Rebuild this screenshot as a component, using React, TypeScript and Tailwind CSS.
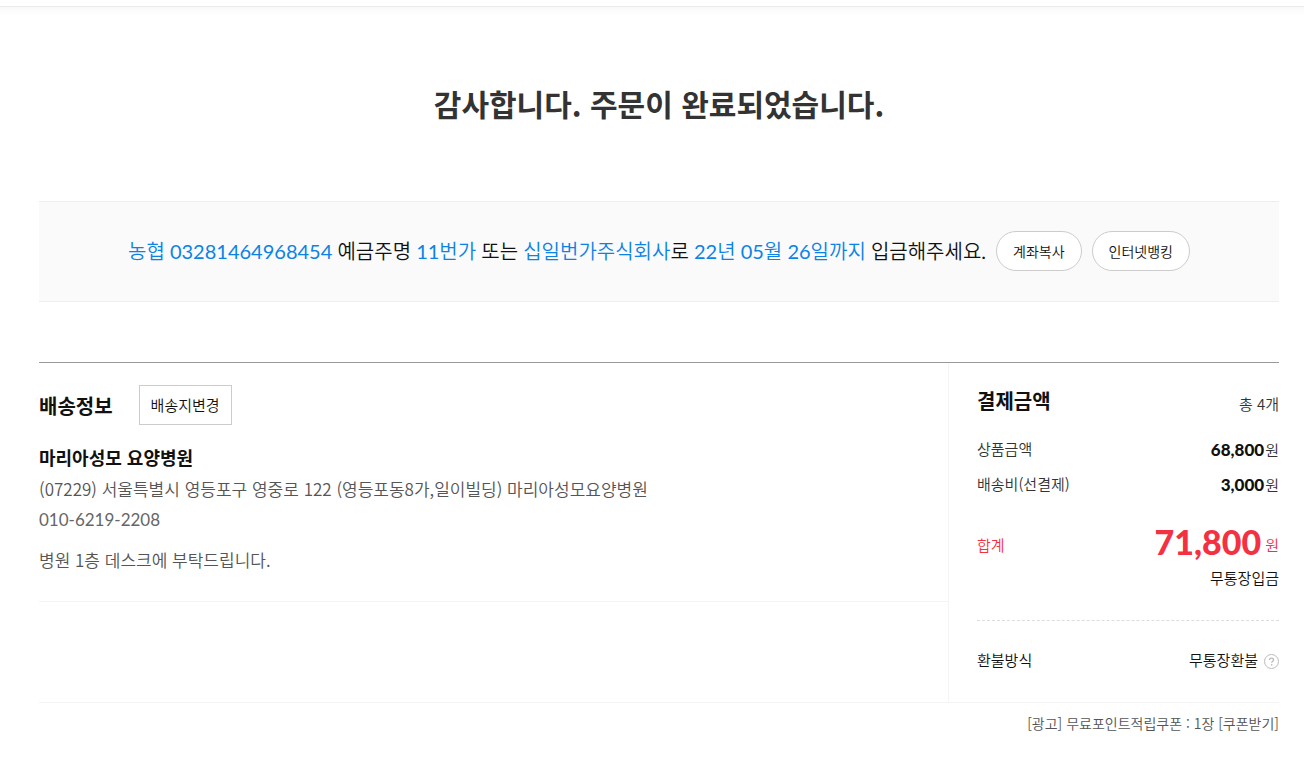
import { ReactNode } from "react"

const charges = [
  { label: "상품금액", amount: "68,800" },
  { label: "배송비(선결제)", amount: "3,000" },
]

function Blue({ children }: { children: ReactNode }) {
  return <em className="not-italic text-[#0b83e6]">{children}</em>
}

function DepositNotice() {
  return (
    <section className="mt-[76px] flex h-[101px] items-center justify-center border-y border-[#eee] bg-[#fafafa] pb-[2px]">
      <p className="font-['Lato','Noto_Sans_CJK_KR_DemiLight','Noto_Sans_CJK_KR',sans-serif] text-[20px] font-normal leading-[30px] text-[#111]">
        <Blue>농협 03281464968454</Blue> 예금주명 <Blue>11번가</Blue> 또는 <Blue>십일번가주식회사</Blue>로 <Blue>22년 05월 26일까지</Blue> 입금해주세요.
      </p>
      <div className="ml-[10px] flex gap-[10px]">
        <button type="button" className="h-10 cursor-pointer rounded-full border border-[#ccc] bg-white px-4 text-sm">계좌복사</button>
        <button type="button" className="h-10 cursor-pointer rounded-full border border-[#ccc] bg-white px-4 text-sm">인터넷뱅킹</button>
      </div>
    </section>
  )
}

function Delivery() {
  return (
    <section className="flex-1">
      <div className="h-[239px] border-b border-[#f4f4f4] pt-[22px]">
        <div className="flex items-center">
          <h2 className="pt-[2px] text-[20px] font-bold leading-[32px]">배송정보</h2>
          <button type="button" className="ml-[26px] h-10 cursor-pointer border border-[#ccc] bg-white px-[11px] text-[15px]">배송지변경</button>
        </div>
        <h3 className="mt-[17px] text-[18px] font-bold leading-[31px]">마리아성모 요양병원</h3>
        <div className="text-[17px] leading-[31px] text-[#555]">
          <p>(07229) 서울특별시 영등포구 영중로 122 (영등포동8가,일이빌딩) 마리아성모요양병원</p>
          <p className="font-['Lato','Noto_Sans_CJK_KR',sans-serif] font-normal text-[#666]">010-6219-2208</p>
          <p className="mt-[9px]">병원 1층 데스크에 부탁드립니다.</p>
        </div>
      </div>
    </section>
  )
}

function Payment() {
  return (
    <section className="w-[331px] border-l border-[#f4f4f4] pl-7 text-[15px]">
      <div className="flex items-center justify-between pt-[22px]">
        <h2 className="text-[20px] font-bold leading-[32px]">결제금액</h2>
        <span className="pt-[6px] text-[#333]">총 4개</span>
      </div>
      <dl className="mt-[15px]">
        {charges.map((c) => (
          <div key={c.label} className="flex h-[35px] items-center justify-between">
            <dt className="text-[#333]">{c.label}</dt>
            <dd className="flex items-baseline gap-px text-[#333]">
              <b className="font-['Lato'] text-[17px] font-black text-[#111]">{c.amount}</b>원
            </dd>
          </div>
        ))}
        <div className="mt-[18px] flex h-[46px] items-center justify-between pt-1 text-[#f43142]">
          <dt>합계</dt>
          <dd className="flex items-center gap-1">
            <b className="pb-[6px] font-['Lato'] text-[34px] font-black leading-[36px]">71,800</b>원
          </dd>
        </div>
      </dl>
      <p className="pt-px text-right leading-[22px] text-[#111]">무통장입금</p>
      <div className="mt-[31px] flex h-[82px] items-center justify-between border-t border-dashed border-[#ddd] pb-[2px] text-[#111]">
        <span>환불방식</span>
        <span className="flex items-center gap-[5px]">
          무통장환불
          <button type="button" aria-label="환불방식 안내" className="cursor-pointer">
            <svg width="16" height="16" viewBox="0 0 16 16" fill="none" stroke="#bbb">
              <circle cx="8.5" cy="8.5" r="7" />
              <path d="M6.5 7.1c0-1.3.8-1.9 2-1.9s2 .7 2 1.7c0 1.3-1.8 1.4-1.8 2.9M8.7 11.1v1.3" strokeWidth="1.3" />
            </svg>
          </button>
        </span>
      </div>
    </section>
  )
}

function App() {
  return (
    <div className="bg-white pt-[6px] font-['Noto_Sans_CJK_KR',sans-serif] font-[350] text-[#111]" lang="ko">
      <div className="h-[10px] border-t border-[#ebebeb] bg-linear-to-b from-[#f9f9f9] to-white" />
      <main className="mr-[25px] ml-[39px]">
        <h1 className="pt-[65px] text-center text-[30px] font-bold leading-[44px] text-[#333]">감사합니다. 주문이 완료되었습니다.</h1>
        <DepositNotice />
        <div className="mt-[60px] flex min-h-[341px] border-t border-b border-t-[#999] border-b-[#f4f4f4]">
          <Delivery />
          <Payment />
        </div>
        <p className="pt-[9px] text-right text-sm leading-[22px] text-[#555]">
          [광고] 무료포인트적립쿠폰 : 1장 <a href="#coupon">[쿠폰받기]</a>
        </p>
      </main>
    </div>
  )
}
export default App
